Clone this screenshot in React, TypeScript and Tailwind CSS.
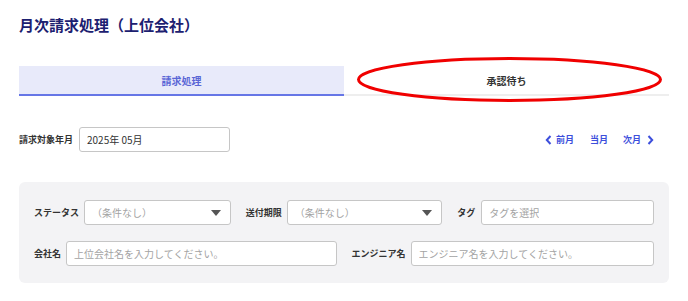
import React from "react";

const font = { fontFamily: '"Noto Sans CJK JP", "Noto Sans", sans-serif' };

function Caret() {
  return (
    <svg width="10" height="6" viewBox="0 0 10 6" className="shrink-0">
      <path d="M0 0 L10 0 L5 6 Z" fill="#555" />
    </svg>
  );
}

function Label({ children }: { children: React.ReactNode }) {
  return (
    <span className="shrink-0 text-[9px] font-bold text-[#333] leading-none whitespace-nowrap">
      {children}
    </span>
  );
}

function TextBox({ placeholder }: { placeholder: string }) {
  return (
    <div className="flex-1 min-w-0 h-[25px] bg-white border border-[#c6c6c6] rounded-[3px] flex items-center px-[7px]">
      <span className="text-[10px] text-[#a3a3a3] whitespace-nowrap overflow-hidden">{placeholder}</span>
    </div>
  );
}

function SelectBox({ placeholder }: { placeholder: string }) {
  return (
    <div className="flex-1 min-w-0 h-[25px] bg-white border border-[#c6c6c6] rounded-[3px] flex items-center justify-between pl-[7px] pr-[9px]">
      <span className="text-[10px] text-[#a3a3a3] whitespace-nowrap">{placeholder}</span>
      <Caret />
    </div>
  );
}

function ChevL() {
  return (
    <svg width="7" height="10" viewBox="0 0 7 10">
      <path d="M5.5 1 L1.8 5 L5.5 9" fill="none" stroke="#3d4fdc" strokeWidth="2" />
    </svg>
  );
}
function ChevR() {
  return (
    <svg width="7" height="10" viewBox="0 0 7 10">
      <path d="M1.5 1 L5.2 5 L1.5 9" fill="none" stroke="#3d4fdc" strokeWidth="2" />
    </svg>
  );
}

export default function App() {
  return (
    <div className="w-[688px] h-[301px] bg-white px-[19px] relative overflow-hidden" style={font}>
      <div className="pt-[14px] h-[35px]">
        <h1 className="text-[15px] leading-[21px] font-bold text-[#1c2070] whitespace-nowrap">
          月次請求処理（上位会社）
        </h1>
      </div>

      <div className="mt-[31px] flex h-[30px]">
        <div className="flex-1 bg-[#e8eafa] border-b-2 border-[#6676e6] flex items-center justify-center">
          <span className="text-[10px] font-bold text-[#5a66d6]">請求処理</span>
        </div>
        <div className="flex-1 bg-white border-b-2 border-[#eeeeee] flex items-center justify-center">
          <span className="text-[10px] font-bold text-[#333]">承認待ち</span>
        </div>
      </div>

      <div className="mt-[31px] flex items-center justify-between h-[25px]">
        <div className="flex items-center gap-[6px]">
          <Label>請求対象年月</Label>
          <div className="w-[151px] h-[25px] bg-white border border-[#c6c6c6] rounded-[3px] flex items-center px-[7px]">
            <span className="text-[10px] text-[#333] whitespace-nowrap">2025年 05月</span>
          </div>
        </div>
        <div className="flex items-center pr-[15px] text-[9px] font-bold text-[#3d4fdc]">
          <div className="flex items-center gap-[4px]">
            <ChevL />
            <span>前月</span>
          </div>
          <span className="ml-[16px]">当月</span>
          <div className="flex items-center gap-[6px] ml-[15px]">
            <span>次月</span>
            <ChevR />
          </div>
        </div>
      </div>

      <div className="mt-[30px] bg-[#f3f3f5] rounded-[6px] pt-[18px] pb-[17px] px-[15px] flex flex-col gap-[16px]">
        <div className="grid grid-cols-3 gap-x-[15px]">
          <div className="flex items-center gap-[5px]">
            <Label>ステータス</Label>
            <SelectBox placeholder="（条件なし）" />
          </div>
          <div className="flex items-center gap-[5px]">
            <Label>送付期限</Label>
            <SelectBox placeholder="（条件なし）" />
          </div>
          <div className="flex items-center gap-[6px]">
            <Label>タグ</Label>
            <TextBox placeholder="タグを選択" />
          </div>
        </div>
        <div className="grid grid-cols-2 gap-x-[15px]">
          <div className="flex items-center gap-[5px]">
            <Label>会社名</Label>
            <TextBox placeholder="上位会社名を入力してください。" />
          </div>
          <div className="flex items-center gap-[5px]">
            <Label>エンジニア名</Label>
            <TextBox placeholder="エンジニア名を入力してください。" />
          </div>
        </div>
      </div>

      <svg
        className="absolute left-0 top-0 pointer-events-none"
        width="688"
        height="301"
        viewBox="0 0 688 301"
      >
        <ellipse cx="509.5" cy="79.5" rx="151" ry="21" fill="none" stroke="#f00000" strokeWidth="3" />
      </svg>
    </div>
  );
}
